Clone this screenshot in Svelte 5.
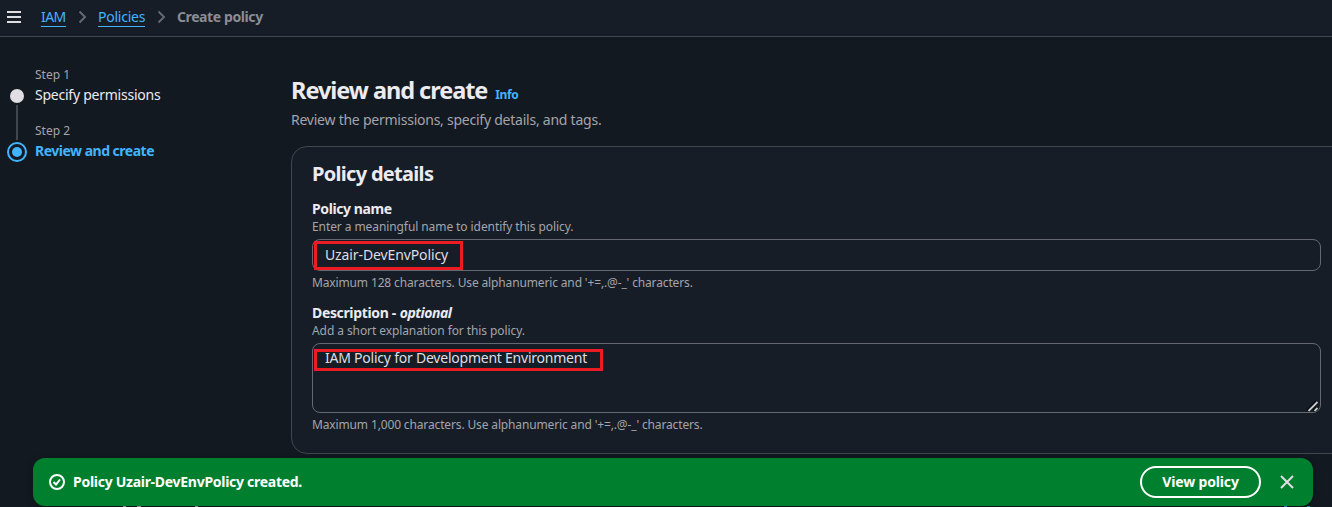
<script>
  const crumbs = ['IAM', 'Policies'];
</script>

<div class="page">
  <header>
    <svg class="menu" width="14" height="14" viewBox="0 0 14 14"><path d="M0 2h14M0 7h14M0 12h14" stroke="#dedee3" stroke-width="2" /></svg>
    {#each crumbs as c, i}
      <a href="#top" class="crumb c{i}"><span>{c}</span></a>
      <svg class="chev" width="9" height="14" viewBox="0 0 9 14"><path d="M1.500 1.500L7 7l-5.500 5.500" fill="none" stroke="#656871" stroke-width="2" /></svg>
    {/each}
    <span class="current">Create policy</span>
  </header>

  <div class="body">
    <nav>
      <div class="step">
        <small>Step 1</small>
        <span class="name s1">Specify permissions</span>
      </div>
      <div class="step">
        <small>Step 2</small>
        <span class="name s2">Review and create</span>
      </div>
      <svg class="track" width="22" height="80" viewBox="0 0 22 80">
        <circle cx="11" cy="12" r="7" fill="#dedee3" />
        <path d="M11 21v35" stroke="#424650" stroke-width="2" />
        <circle cx="11" cy="68" r="9" fill="none" stroke="#42b4ff" stroke-width="2" />
        <circle cx="11" cy="68" r="5" fill="#42b4ff" />
      </svg>
    </nav>

    <main>
      <div class="title"><h1>Review and create</h1><a href="#info" class="info">Info</a></div>
      <p class="sub">Review the permissions, specify details, and tags.</p>

      <section>
        <h2>Policy details</h2>
        <div class="label l1">Policy name</div>
        <div class="hint">Enter a meaningful name to identify this policy.</div>
        <div class="field"><span class="v1">Uzair-DevEnvPolicy</span><i class="mark m1"></i></div>
        <div class="hint after">Maximum 128 characters. Use alphanumeric and '+=,.@-_' characters.</div>
        <div class="label l2"><span>Description -</span><em>optional</em></div>
        <div class="hint">Add a short explanation for this policy.</div>
        <div class="field area">
          <span class="v2">IAM Policy for Development Environment</span><i class="mark m2"></i>
          <svg class="grip" width="12" height="12" viewBox="0 0 12 12"><path d="M1 11L10 2M7 11l3-3" stroke="#05080c" stroke-width="4" /><path d="M1.500 11L10.500 2M7.500 11L10.500 8" stroke="#c8c8cc" stroke-width="1.900" /></svg>
        </div>
        <div class="hint after">Maximum 1,000 characters. Use alphanumeric and '+=,.@-_' characters.</div>
      </section>
    </main>
  </div>

  <div class="flash">
    <svg width="16" height="16" viewBox="0 0 16 16" fill="none" stroke="#fff" stroke-width="2"><circle cx="8" cy="8" r="7" /><path d="M4.500 8l2.500 2.500L11 5.500" /></svg>
    <span class="msg">Policy Uzair-DevEnvPolicy created.</span>
    <button><span>View policy</span></button>
    <svg class="close" width="14" height="14" viewBox="0 0 14 14"><path d="M1 1l12 12M13 1L1 13" stroke="#dedee3" stroke-width="2" /></svg>
  </div>
  <svg class="edge" width="1332" height="1" viewBox="0 0 1332 1"><path d="M123 .5h3M137 .5h4M195 .5h3" stroke="#8c8c94" /><path d="M1284 .5h3M1307 .5h3" stroke="#2d7db3" /></svg>
</div>

<style>
  :global(body) { margin: 0; background: #131920; overflow: hidden; }
  .page { position: relative; height: 507px; overflow: hidden; background: #131920; color: #ebebf0; font: 14px/20px "Noto Sans", sans-serif; white-space: nowrap; }
  header { height: 36px; box-sizing: content-box; border-bottom: 1px solid #424650; background: #161d26; display: flex; align-items: center; padding-left: 7px; }
  .menu { margin: -2px 20px 0 0; }
  a { color: #42b4ff; text-decoration: none; }
  .crumb { line-height: 16px; border-bottom: 1px solid #42b4ff; box-sizing: border-box; height: 18px; }
  .c0 { width: 25px; letter-spacing: -0.6px; }
  .c1 { width: 47px; letter-spacing: -0.25px; }
  .chev { margin: -2px 11px 0 12px; }
  .current { color: #8c8c94; font-weight: 700; letter-spacing: -0.4px; font-size: 14px; margin-top: -2px; }
  .body { display: flex; }
  nav { position: relative; width: 256px; padding: 28px 0 0 35px; flex: none; box-sizing: content-box; }
  .step { height: 56px; }
  small { display: block; font-size: 12px; line-height: 20px; color: #a4a4ad; }
  .name { display: block; }
  .s1 { letter-spacing: -0.24px; }
  .s2 { color: #42b4ff; font-weight: 700; letter-spacing: -0.5px; }
  .track { position: absolute; left: 6px; top: 47px; }
  main { flex: none; width: 1100px; padding-top: 38px; }
  .title { display: flex; align-items: baseline; height: 32px; }
  h1 { margin: 0; font-size: 23.5px; line-height: 31px; letter-spacing: -1.04px; }
  .info { font-size: 12px; font-weight: 700; margin-left: 8px; letter-spacing: -0.4px; }
  .sub { margin: 3px 0 16px; color: #a4a4ad; letter-spacing: -0.24px; }
  section { height: 306px; border: 1px solid #424650; border-radius: 16px; background: #161d26; padding-left: 20px; }
  h2 { margin: 15px 0 13px; font-size: 20px; line-height: 24px; letter-spacing: -0.7px; }
  .label { font-weight: 700; line-height: 20px; letter-spacing: -0.4px; }
  .hint { font-size: 12px; line-height: 16px; color: #a4a4ad; letter-spacing: -0.085px; }
  .field { position: relative; width: 1009px; height: 32px; box-sizing: border-box; border: 1px solid #656871; border-radius: 8px; margin-top: 4px; padding: 5px 12px; line-height: 20px; color: #dedee3; }
  .area { height: 70px; }
  .v1 { letter-spacing: -0.11px; }
  .v2 { position: relative; top: -1px; letter-spacing: -0.23px; }
  .after { margin-top: 4px; letter-spacing: -0.14px; }
  .l2 { margin-top: 12px; display: flex; gap: 4px; letter-spacing: -0.35px; }
  em { letter-spacing: -0.5px; }
  .mark { position: absolute; border: 3px solid #ed1c24; box-sizing: border-box; }
  .m1 { left: 1px; top: 1px; width: 149px; height: 29px; }
  .m2 { left: 1px; top: 5px; width: 289px; height: 22px; }
  .grip { position: absolute; right: 1px; bottom: 0; }
  .flash { position: absolute; left: 33px; top: 458px; width: 1280px; height: 48px; box-sizing: border-box; border-radius: 12px; background: #00802f; color: #fff; display: flex; align-items: center; padding: 0 19px 0 16px; box-shadow: 0 2px 6px #0f141a; }
  .msg { margin-left: 8px; font-weight: 700; letter-spacing: -0.28px; flex: 1; }
  button { width: 121px; height: 32px; border: 2px solid #fff; border-radius: 20px; background: none; color: #fff; font: 700 14px/20px "Noto Sans", sans-serif; letter-spacing: -0.14px; padding: 0; margin-right: 19px; }
  .edge { position: absolute; left: 0; bottom: 0; }
</style>
